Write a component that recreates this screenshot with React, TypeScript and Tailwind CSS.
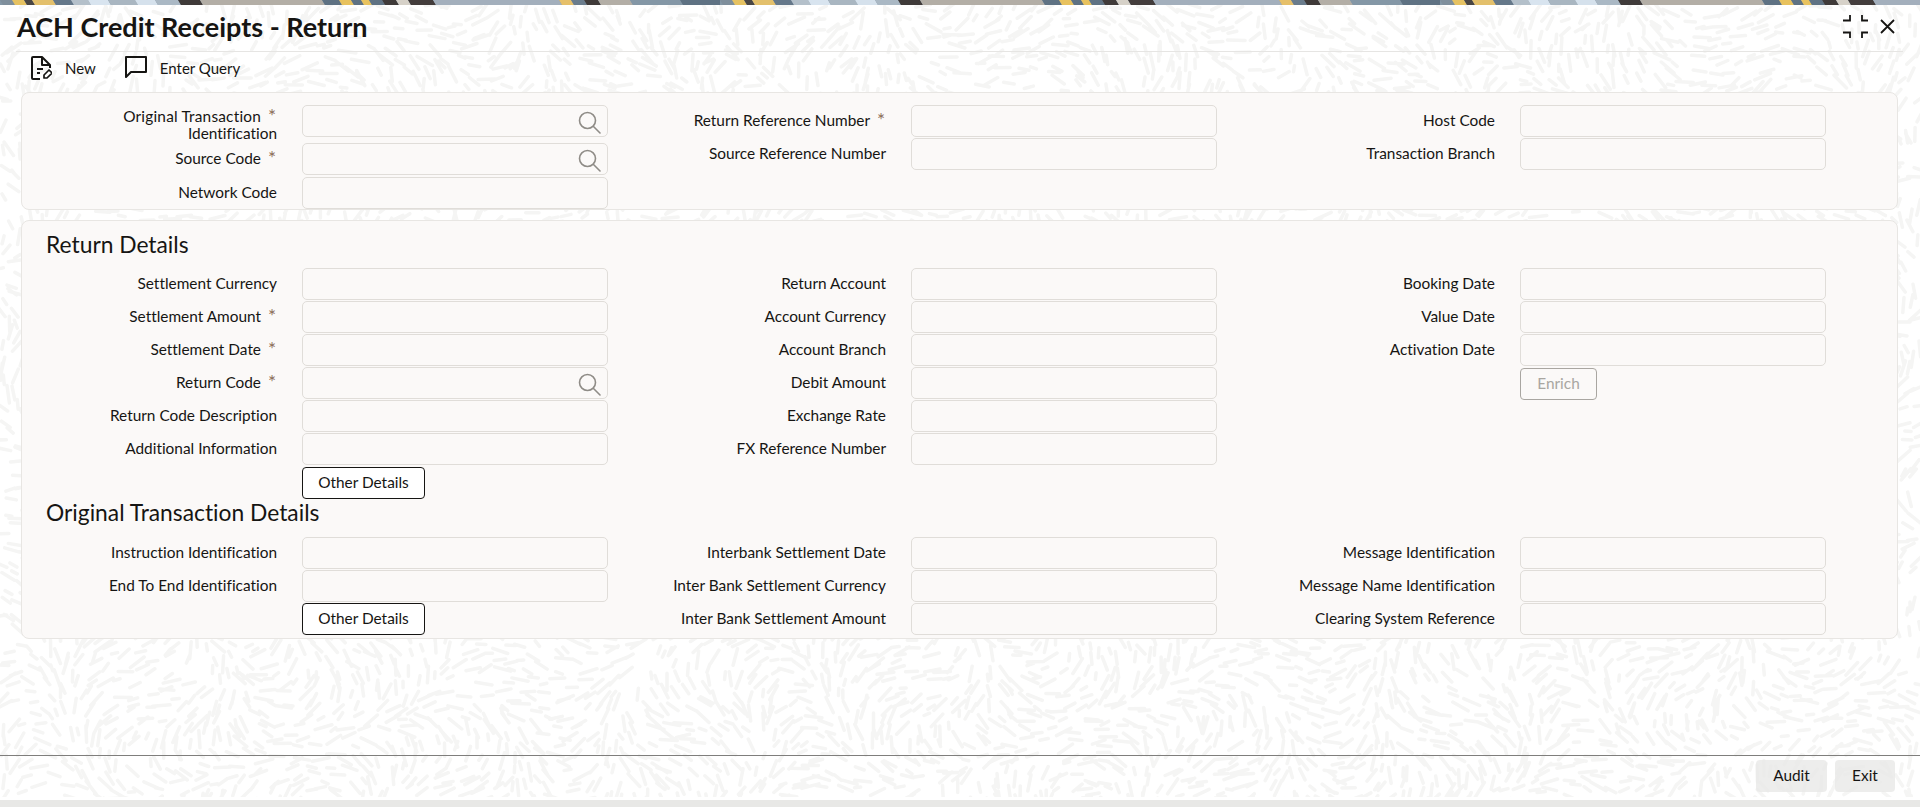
import React, { useMemo } from 'react';

const FONT = "font-['Lato','Noto_Sans',sans-serif] [font-variant-ligatures:none]";

// rice-grain texture behind the form, one long path
const buildTexture = () => {
  let seed = 12345;
  const rnd = () => {
    seed = (seed * 16807) % 2147483647;
    return seed / 2147483647;
  };
  let d = '';
  const step = 12;
  for (let y = 0; y < 800; y += step) {
    for (let x = 0; x < 1920; x += step) {
      if (rnd() < 0.15) continue;
      const px = x + rnd() * step;
      const py = y + rnd() * step;
      const angle =
        Math.sin(px / 60 + Math.cos(py / 70)) * 1.6 +
        Math.cos(py / 50 - px / 130) * 1.4 +
        (rnd() - 0.5) * 0.8;
      const len = 3 + rnd() * 6;
      const dx = Math.cos(angle) * len;
      const dy = Math.sin(angle) * len;
      d += `M${(px - dx).toFixed(1)} ${(py - dy).toFixed(1)}L${(px + dx).toFixed(1)} ${(py + dy).toFixed(1)}`;
    }
  }
  return d;
};

const Texture = () => {
  const d = useMemo(buildTexture, []);
  return (
    <svg className="absolute left-0 top-[5px] h-[792px] w-[1920px]" viewBox="0 0 1920 792">
      <path d={d} fill="none" stroke="#f5f5f4" strokeWidth="3.5" strokeLinecap="round" />
    </svg>
  );
};

const BANNER: [number, number, string][] = [
  [0, 12, '#7f8f9c'],
  [12, 24, '#e6c262'],
  [24, 32, '#4a4644'],
  [32, 53, '#e3c06c'],
  [53, 71, '#65788a'],
  [71, 88, '#b4c0ca'],
  [88, 108, '#d8e4ef'],
  [108, 135, '#a9b6c1'],
  [135, 155, '#d5e1ec'],
  [155, 178, '#aab8c4'],
  [178, 200, '#3f3a39'],
  [200, 322, '#b3aea6'],
  [322, 339, '#5f7283'],
  [339, 351, '#e8c25e'],
  [351, 361, '#5f7283'],
  [361, 369, '#e8c25e'],
  [369, 382, '#5f7283'],
  [382, 396, '#3f3a39'],
  [396, 408, '#d6d1c8'],
  [408, 433, '#433d3c'],
  [433, 559, '#a3afbc'],
  [559, 571, '#e6c06a'],
  [571, 584, '#6a7c8c'],
  [584, 598, '#3f3a39'],
  [598, 630, '#b3aea6'],
  [630, 680, '#8497a6'],
  [680, 720, '#5f7283'],
];

const Banner = () => (
  <svg className="block h-[5px] w-full shrink-0" viewBox="0 0 1920 5">
    <defs>
      <pattern id="banner" width="720" height="5" patternUnits="userSpaceOnUse" x="0">
        <rect width="720" height="5" fill="#8497a6" />
        {BANNER.map(([a, b, c]) => (
          <polygon key={a} points={`${a},0 ${b},0 ${b + 3},5 ${a + 3},5`} fill={c} />
        ))}
      </pattern>
    </defs>
    <rect width="1920" height="5" fill="url(#banner)" />
  </svg>
);

const SearchIcon = () => (
  <svg className="absolute right-[6px] top-[4px]" width="24" height="24" viewBox="0 0 24 24" fill="none" stroke="#8f8c87" strokeWidth="1.6">
    <circle cx="10.5" cy="10.5" r="8" />
    <path d="M16.5 16.5L23 23" strokeLinecap="round" />
  </svg>
);

const Star = () => (
  <span className="ml-[6px] mr-[1px] w-[9px] self-start text-right text-[19px] leading-[15px] text-[#8a6d57]">*</span>
);

type FieldProps = {
  label: string;
  line2?: string;
  required?: boolean;
  search?: boolean;
  rowClass?: string;
};

const Field = ({ label, line2, required, search, rowClass = 'h-[33px]' }: FieldProps) => (
  <div className={`flex items-start ${rowClass}`}>
    <div className={`flex h-[32px] w-[255px] flex-col text-right text-[15.4px] leading-[17px] text-[#161513] ${line2 ? 'pt-[3px]' : 'justify-center pb-[2px]'}`}>
      <div className="flex justify-end whitespace-nowrap">
        <span className={line2 ? 'tracking-[0.2px]' : ''}>{label}</span>
        {required && <Star />}
      </div>
      {line2 && <div className="whitespace-nowrap">{line2}</div>}
    </div>
    <div className="relative ml-[25px] h-[32px] w-[306px] rounded-[5px] border border-[#e0ddd9] bg-[#fbf9f8]">
      {search && <SearchIcon />}
    </div>
  </div>
);

const OtherDetails = ({ className = '' }: { className?: string }) => (
  <button className={`ml-[280px] h-[32px] w-[123px] rounded-[4px] border border-[#161513] bg-white text-[15.4px] text-[#161513] ${className}`}>
    Other Details
  </button>
);

const Column = ({ children }: { children: React.ReactNode }) => <div className="flex flex-col">{children}</div>;

export default function App() {
  return (
    <div className={`relative flex h-[807px] w-full flex-col overflow-hidden bg-white ${FONT}`}>
      <Texture />
      <Banner />
      <div className="relative ml-[16px] mr-[17px] flex h-[47px] shrink-0 items-center justify-between border-b border-[#e6e5e3] pb-[3px]">
        <h1 className="ml-[1px] text-[27px] font-bold leading-none text-[#161513]">ACH Credit Receipts - Return</h1>
        <div className="mr-[8px] flex items-center gap-[12px]">
          <svg width="25" height="23" viewBox="0 0 25 23" fill="none" stroke="#161513" strokeWidth="1.8">
            <path d="M0 5.5h7V0M19 0v5.5h6M0 17.5h7V23M25 17.5h-6V23" />
          </svg>
          <svg width="15" height="15" viewBox="0 0 15 15" fill="none" stroke="#161513" strokeWidth="1.8">
            <path d="M1 1l13 13M14 1L1 14" />
          </svg>
        </div>
      </div>
      <div className="relative flex h-[40px] shrink-0 items-start pl-[31px] pt-[4px] text-[15px] text-[#161513]">
        <svg width="21" height="24" viewBox="0 0 21 24" fill="none" stroke="#161513" strokeWidth="2" strokeLinejoin="round">
          <path d="M9 23H2a1 1 0 0 1-1-1V2a1 1 0 0 1 1-1h9l8 8v3" />
          <path d="M11 1v8h8" />
          <path d="M6 13h6M6 17h3" />
          <path d="M13 22v-3l5-5 3 3-5 5z" strokeWidth="1.7" />
        </svg>
        <span className="ml-[13px] leading-[24px]">New</span>
        <svg className="ml-[29px]" width="22" height="22" viewBox="0 0 22 22" fill="none" stroke="#161513" strokeWidth="2" strokeLinejoin="round">
          <path d="M1 1h20v15H6l-5 5z" />
        </svg>
        <span className="ml-[13px] leading-[24px]">Enter Query</span>
      </div>

      <section className="relative mx-[21px] h-[118px] w-[1877px] shrink-0 rounded-[8px] border border-[#e8e6e3] bg-[#fbf9f8] pt-[12px]">
        <div className="grid grid-cols-[609px_609px_609px]">
          <Column>
            <Field label="Original Transaction" line2="Identification" required search rowClass="h-[38px]" />
            <Field label="Source Code" required search rowClass="h-[34px]" />
            <Field label="Network Code" />
          </Column>
          <Column>
            <Field label="Return Reference Number" required />
            <Field label="Source Reference Number" />
          </Column>
          <Column>
            <Field label="Host Code" />
            <Field label="Transaction Branch" />
          </Column>
        </div>
      </section>

      <section className="relative mx-[21px] mt-[10px] h-[419px] w-[1877px] shrink-0 rounded-[8px] border border-[#e8e6e3] bg-[#fbf9f8]">
        <h2 className="flex h-[47px] items-center pb-px pl-[24px] text-[22.8px] leading-none text-[#161513]">Return Details</h2>
        <div className="grid grid-cols-[609px_609px_609px]">
          <Column>
            <Field label="Settlement Currency" />
            <Field label="Settlement Amount" required />
            <Field label="Settlement Date" required />
            <Field label="Return Code" required search />
            <Field label="Return Code Description" />
            <Field label="Additional Information" />
            <OtherDetails className="mt-px" />
          </Column>
          <Column>
            <Field label="Return Account" />
            <Field label="Account Currency" />
            <Field label="Account Branch" />
            <Field label="Debit Amount" />
            <Field label="Exchange Rate" />
            <Field label="FX Reference Number" />
          </Column>
          <Column>
            <Field label="Booking Date" />
            <Field label="Value Date" />
            <Field label="Activation Date" />
            <button className="ml-[280px] mt-px h-[32px] w-[77px] rounded-[4px] border border-[#a9a6a1] text-[15.4px] text-[#a9a6a1]">
              Enrich
            </button>
          </Column>
        </div>
        <h2 className="flex h-[38px] items-center pb-[12px] pl-[24px] text-[22.8px] leading-none text-[#161513]">Original Transaction Details</h2>
        <div className="grid grid-cols-[609px_609px_609px]">
          <Column>
            <Field label="Instruction Identification" />
            <Field label="End To End Identification" />
            <OtherDetails />
          </Column>
          <Column>
            <Field label="Interbank Settlement Date" />
            <Field label="Inter Bank Settlement Currency" />
            <Field label="Inter Bank Settlement Amount" />
          </Column>
          <Column>
            <Field label="Message Identification" />
            <Field label="Message Name Identification" />
            <Field label="Clearing System Reference" />
          </Column>
        </div>
      </section>

      <div className="relative mt-[116px] h-px w-full shrink-0 bg-[#7f7e7c]" />
      <div className="relative flex h-[44px] shrink-0 items-start justify-end gap-[8px] pr-[25px] pt-[4px] text-[15.4px] text-[#161513]">
        <button className="h-[32px] w-[71px] rounded-[4px] bg-[#e9e9e7]/80">Audit</button>
        <button className="h-[32px] w-[60px] rounded-[4px] bg-[#e9e9e7]/80">Exit</button>
      </div>
      <div className="relative h-[7px] w-full shrink-0 bg-[#e8e8e6]" />
    </div>
  );
}
